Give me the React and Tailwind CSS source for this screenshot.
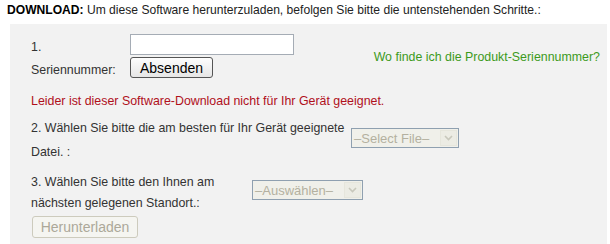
import React from "react";

function FakeSelect({ label, width }) {
  return (
    <div
      className="flex h-[20px] items-stretch border border-[#8fa0b0] bg-[#f0f0ea] p-px"
      style={{ width }}
    >
      <div className="flex flex-1 items-center pl-[1px] text-[13px] leading-none text-[#b4b0a0]">
        {label}
      </div>
      <div className="flex w-[17px] items-center justify-center border border-[#e6e6dc] bg-[#ecece4]">
        <svg width="9" height="6" viewBox="0 0 9 6">
          <path d="M1 1 L4.5 4.5 L8 1" stroke="#c8c8bc" strokeWidth="1.6" fill="none" />
        </svg>
      </div>
    </div>
  );
}

export default function App() {
  return (
    <div className="h-[244px] w-[610px] overflow-hidden bg-white font-['Liberation_Sans',Arial,sans-serif] text-[12px] text-[#333]">
      <div className="h-[24px] pl-[7px] pt-[3px] text-[12.1px] leading-[14px] text-[#222]">
        <span className="font-bold text-black">DOWNLOAD:</span> Um diese Software herunterzuladen, befolgen Sie bitte die untenstehenden Schritte.:
      </div>
      <div className="ml-[10px] mr-[3px] h-[220px] bg-[#f2f2f2] pl-[21px] pt-[10px] text-[12.4px]">
        {/* Row 1 */}
        <div className="flex">
          <div className="w-[99px] pt-[2px] leading-[23px]">
            <div>1.</div>
            <div>Seriennummer:</div>
          </div>
          <div className="flex flex-col gap-[2px]">
            <div className="h-[21px] w-[164px] border border-[#a5acb5] bg-white" />
            <button className="flex h-[21px] w-[83px] items-center justify-center rounded-[3px] border border-[#555] bg-gradient-to-b from-[#fdfdfd] to-[#e6e6e6] text-[14px] leading-none text-black">
              Absenden
            </button>
          </div>
          <div className="flex-1 pr-[7px] pt-[15px] text-right leading-[16px] text-[#3d9a1c]">
            Wo finde ich die Produkt-Seriennummer?
          </div>
        </div>
        {/* Error */}
        <div className="mt-[11px] leading-[16px] text-[#b0101c]">
          Leider ist dieser Software-Download nicht für Ihr Gerät geeignet.
        </div>
        {/* Row 2 */}
        <div className="mt-[7px] flex">
          <div className="w-[320px] leading-[24px]">
            2. Wählen Sie bitte die am besten für Ihr Gerät geeignete Datei. :
          </div>
          <div className="pt-[12px]">
            <FakeSelect label="–Select File–" width={108} />
          </div>
        </div>
        {/* Row 3 */}
        <div className="mt-[8px] flex">
          <div className="w-[221px] leading-[21px]">
            3. Wählen Sie bitte den Ihnen am nächsten gelegenen Standort.:
          </div>
          <div className="pt-[8px]">
            <FakeSelect label="–Auswählen–" width={111} />
          </div>
        </div>
        <button className="mt-[2px] ml-[1px] flex h-[22px] w-[106px] items-center justify-center rounded-[3px] border border-[#cdcbbd] bg-[#f5f5f1] text-[14px] leading-none text-[#aca899]">
          Herunterladen
        </button>
      </div>
    </div>
  );
}
